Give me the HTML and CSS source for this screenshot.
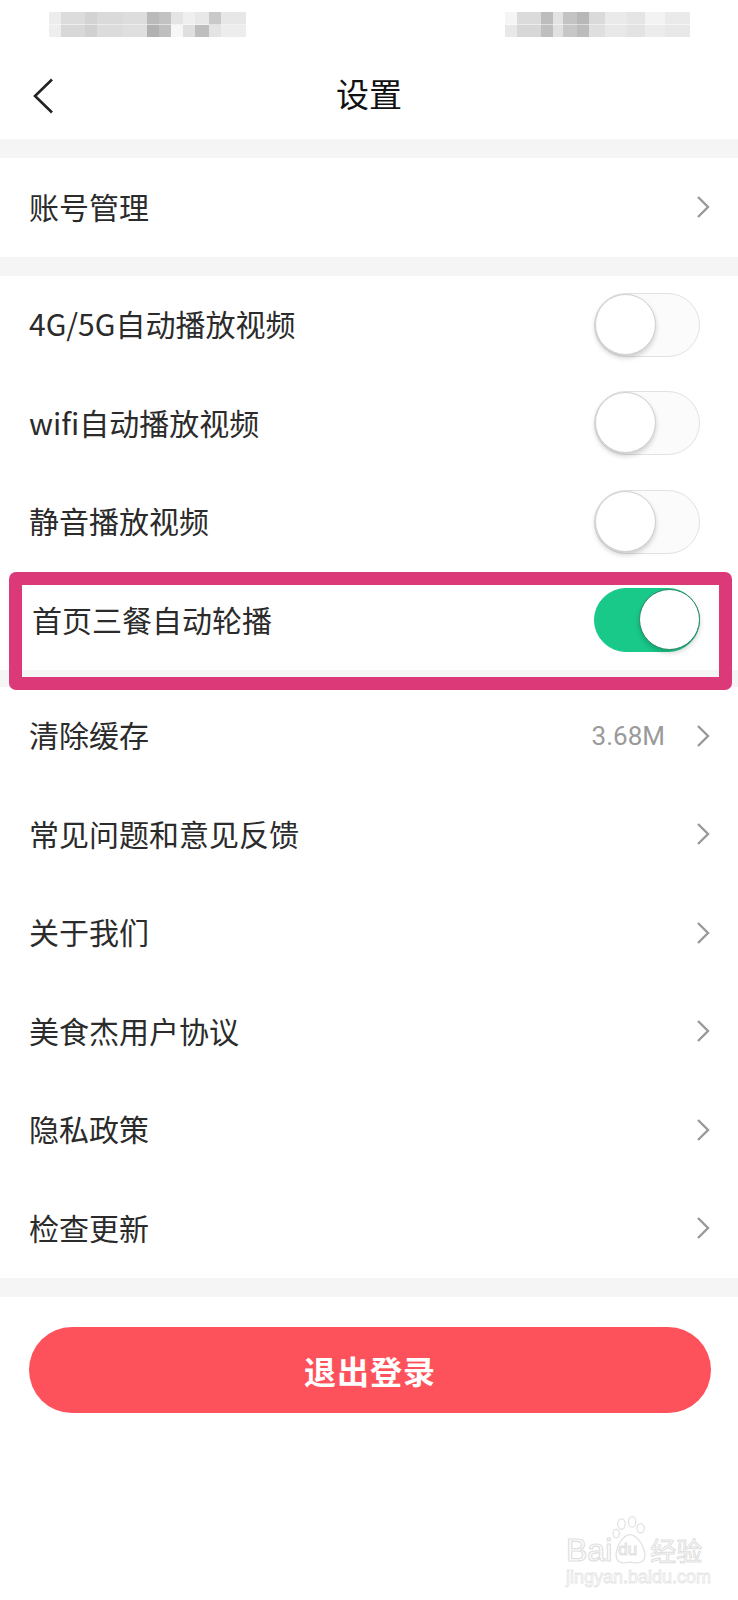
FILE: index.html
```html
<!DOCTYPE html>
<html lang="zh-CN">
<head>
    <meta charset="UTF-8">
    <title>设置</title>
    <link rel="stylesheet" href="styles.css">
</head>
<body>
    <div class="page">
        <!-- blurred status bar -->
        <div class="status-bar">
            <div class="blur blur-left"></div>
            <div class="blur blur-right"></div>
        </div>

        <div class="header">
            <svg class="back" width="22" height="36" viewBox="0 0 22 36">
                <polyline points="20,1.5 3,18 20,34.5" fill="none" stroke="#222" stroke-width="2.6"/>
            </svg>
            <div class="title">设置</div>
            <div></div>
        </div>

        <div class="gap"></div>

        <div class="group">
            <div class="row">
                <span class="label">账号管理</span>
                <span class="right"><svg class="arrow" width="14" height="24" viewBox="0 0 14 24"><polyline points="2,2 12,12 2,22" fill="none" stroke="#999" stroke-width="2.4"/></svg></span>
            </div>
        </div>

        <div class="gap"></div>

        <div class="group">
            <div class="row">
                <span class="label">4G/5G自动播放视频</span>
                <span class="toggle"><span class="knob"></span></span>
            </div>
            <div class="row">
                <span class="label">wifi自动播放视频</span>
                <span class="toggle"><span class="knob"></span></span>
            </div>
            <div class="row">
                <span class="label">静音播放视频</span>
                <span class="toggle"><span class="knob"></span></span>
            </div>
            <div class="row marked">
                <span class="label">首页三餐自动轮播</span>
                <span class="toggle on"><span class="knob"></span></span>
                <div class="highlight"></div>
            </div>
        </div>

        <div class="gap gap-tall"></div>

        <div class="group">
            <div class="row">
                <span class="label">清除缓存</span>
                <span class="right"><span class="value">3.68M</span><svg class="arrow" width="14" height="24" viewBox="0 0 14 24"><polyline points="2,2 12,12 2,22" fill="none" stroke="#999" stroke-width="2.4"/></svg></span>
            </div>
            <div class="row">
                <span class="label">常见问题和意见反馈</span>
                <span class="right"><svg class="arrow" width="14" height="24" viewBox="0 0 14 24"><polyline points="2,2 12,12 2,22" fill="none" stroke="#999" stroke-width="2.4"/></svg></span>
            </div>
            <div class="row">
                <span class="label">关于我们</span>
                <span class="right"><svg class="arrow" width="14" height="24" viewBox="0 0 14 24"><polyline points="2,2 12,12 2,22" fill="none" stroke="#999" stroke-width="2.4"/></svg></span>
            </div>
            <div class="row">
                <span class="label">美食杰用户协议</span>
                <span class="right"><svg class="arrow" width="14" height="24" viewBox="0 0 14 24"><polyline points="2,2 12,12 2,22" fill="none" stroke="#999" stroke-width="2.4"/></svg></span>
            </div>
            <div class="row">
                <span class="label">隐私政策</span>
                <span class="right"><svg class="arrow" width="14" height="24" viewBox="0 0 14 24"><polyline points="2,2 12,12 2,22" fill="none" stroke="#999" stroke-width="2.4"/></svg></span>
            </div>
            <div class="row">
                <span class="label">检查更新</span>
                <span class="right"><svg class="arrow" width="14" height="24" viewBox="0 0 14 24"><polyline points="2,2 12,12 2,22" fill="none" stroke="#999" stroke-width="2.4"/></svg></span>
            </div>
        </div>

        <div class="gap"></div>

        <div class="logout-wrap">
            <button class="logout">退出登录</button>
        </div>

        <!-- site watermark -->
        <div class="watermark">
            <div class="wm-logo">
                <span class="wm-bai">Bai</span>
                <span class="wm-paw">
                    <svg width="36" height="50" viewBox="0 0 34 46">
                        <g fill="none" stroke="#e2e2e2" stroke-width="1.2">
                            <ellipse cx="9" cy="7" rx="3.5" ry="5"/>
                            <ellipse cx="19" cy="5" rx="3.5" ry="5"/>
                            <ellipse cx="27" cy="11" rx="3.5" ry="4.5"/>
                            <ellipse cx="4" cy="16" rx="3" ry="4"/>
                            <path d="M17 17 C10 17 3 30 4 38 C5 45 12 44 17 43 C22 44 30 45 31 38 C32 30 24 17 17 17 Z"/>
                        </g>
                    </svg>
                    <span class="wm-du">du</span>
                </span>
                <span class="wm-jy">经验</span>
            </div>
            <div class="wm-url">jingyan.baidu.com</div>
        </div>
    </div>
</body>
</html>
```

FILE: styles.css
```css
body {
    margin: 0;
    padding: 0;
    background: #fff;
    font-family: "Noto Sans CJK SC", "Noto Sans", sans-serif;
    color: #333;
}

.page {
    position: relative;
    width: 738px;
    height: 1600px;
    overflow: hidden;
    background: #fff;
}

/* status bar (pixelated in the source) */
.status-bar {
    height: 53px;
    display: flex;
    justify-content: space-between;
    padding: 12px 48px 0 49px;
    box-sizing: border-box;
}

.blur {
    height: 25px;
    opacity: 0.9;
}

.blur-left {
    width: 197px;
    background:
        linear-gradient(to right,
            #ececec 0 12px, #d9d9d9 12px 36px, #cfcfcf 36px 48px, #d6d6d6 48px 74px,
            #dadada 74px 98px, #b3b3b3 98px 110px, #bcbcbc 110px 122px, #e2e2e2 122px 134px,
            #eeeeee 134px 146px, #e6e6e6 146px 160px, #c4c4c4 160px 172px, #e5e5e5 172px 197px) top / 100% 50% no-repeat,
        linear-gradient(to right,
            #ededed 0 12px, #d4d4d4 12px 36px, #cccccc 36px 48px, #d9d9d9 48px 74px,
            #dcdcdc 74px 98px, #a9a9a9 98px 110px, #b9b9b9 110px 122px, #f7f7f7 122px 134px,
            #dcdcdc 134px 146px, #b8b8b8 146px 160px, #e2e2e2 160px 172px, #ececec 172px 197px) bottom / 100% 50% no-repeat;
}

.blur-right {
    width: 185px;
    background:
        linear-gradient(to right,
            #f4f4f4 0 12px, #d8d8d8 12px 36px, #b6b6b6 36px 48px, #e0e0e0 48px 58px,
            #bdbdbd 58px 72px, #b0b0b0 72px 84px, #d7d7d7 84px 100px, #e8e8e8 100px 122px,
            #e3e3e3 122px 140px, #f2f2f2 140px 160px, #e8e8e8 160px 185px) top / 100% 50% no-repeat,
        linear-gradient(to right,
            #e6e6e6 0 12px, #d3d3d3 12px 36px, #b9b9b9 36px 48px, #dedede 48px 58px,
            #c2c2c2 58px 72px, #b5b5b5 72px 84px, #dcdcdc 84px 100px, #e6e6e6 100px 122px,
            #e1e1e1 122px 140px, #eaeaea 140px 160px, #e6e6e6 160px 185px) bottom / 100% 50% no-repeat;
}

.header {
    height: 86px;
    display: grid;
    grid-template-columns: 1fr auto 1fr;
    align-items: center;
    padding-left: 32px;
}

.back {
    display: block;
}

.title {
    font-size: 33px;
    font-weight: 400;
    color: #111;
    margin-left: -32px;
    margin-top: -6px;
}

.gap {
    height: 19px;
    background: #f5f5f5;
}

.gap-tall {
    height: 17px;
}

.group {
    background: #fff;
}

.row {
    position: relative;
    height: 98.5px;
    display: flex;
    align-items: center;
    justify-content: space-between;
    padding: 0 28px 0 29px;
    font-size: 30px;
}

.label {
    color: #2b2b2b;
    margin-top: -3px;
}

.right {
    display: flex;
    align-items: center;
    gap: 31px;
}

.value {
    font-family: Roboto, "Noto Sans", sans-serif;
    font-size: 26px;
    color: #9a9a9a;
}

.arrow {
    display: block;
}

/* switches */
.toggle {
    position: relative;
    width: 106px;
    height: 64px;
    box-sizing: border-box;
    border: 1.5px solid #e2e2e2;
    border-radius: 32px;
    background: #fbfbfb;
    margin-right: 10px;
}

.knob {
    position: absolute;
    left: 0;
    top: 0;
    width: 61px;
    height: 61px;
    box-sizing: border-box;
    border-radius: 50%;
    background: #fff;
    border: 1.5px solid #cfcfcf;
    box-shadow: 0 3px 5px rgba(0, 0, 0, 0.18);
}

.toggle.on {
    background: #18c98a;
    border-color: #18c98a;
}

.toggle.on .knob {
    left: auto;
    right: -1px;
    border-color: #2a8762;
}

.marked .label {
    margin-left: 3px;
}

/* annotation frame */
.highlight {
    position: absolute;
    left: 9px;
    top: 1px;
    width: 723px;
    height: 118px;
    box-sizing: border-box;
    border: 13px solid #db3978;
    border-radius: 7px;
    z-index: 2;
}

.logout-wrap {
    padding: 30px 27px 0 29px;
}

.logout {
    display: block;
    width: 100%;
    height: 86px;
    border: none;
    border-radius: 43px;
    background: #fd525c;
    color: #fff;
    font-family: "Noto Sans CJK SC", sans-serif;
    font-size: 32px;
    font-weight: 700;
    letter-spacing: 1px;
}

.watermark {
    position: absolute;
    left: 566px;
    top: 1516px;
    width: 150px;
    color: transparent;
}

.wm-logo {
    display: flex;
    align-items: flex-end;
    height: 50px;
}

.wm-bai {
    font-family: "Liberation Sans", sans-serif;
    font-size: 32px;
    line-height: 32px;
    -webkit-text-stroke: 1.2px #e0e0e0;
}

.wm-paw {
    position: relative;
    width: 36px;
    height: 50px;
}

.wm-paw svg {
    display: block;
}

.wm-du {
    position: absolute;
    left: 6px;
    bottom: 6px;
    font-family: "Liberation Sans", sans-serif;
    font-size: 17px;
    -webkit-text-stroke: 1px #e0e0e0;
}

.wm-jy {
    font-size: 26px;
    line-height: 32px;
    margin-left: 2px;
    -webkit-text-stroke: 1px #e0e0e0;
}

.wm-url {
    font-family: "Liberation Sans", sans-serif;
    font-size: 18px;
    line-height: 22px;
    -webkit-text-stroke: 0.8px #e4e4e4;
}
```
